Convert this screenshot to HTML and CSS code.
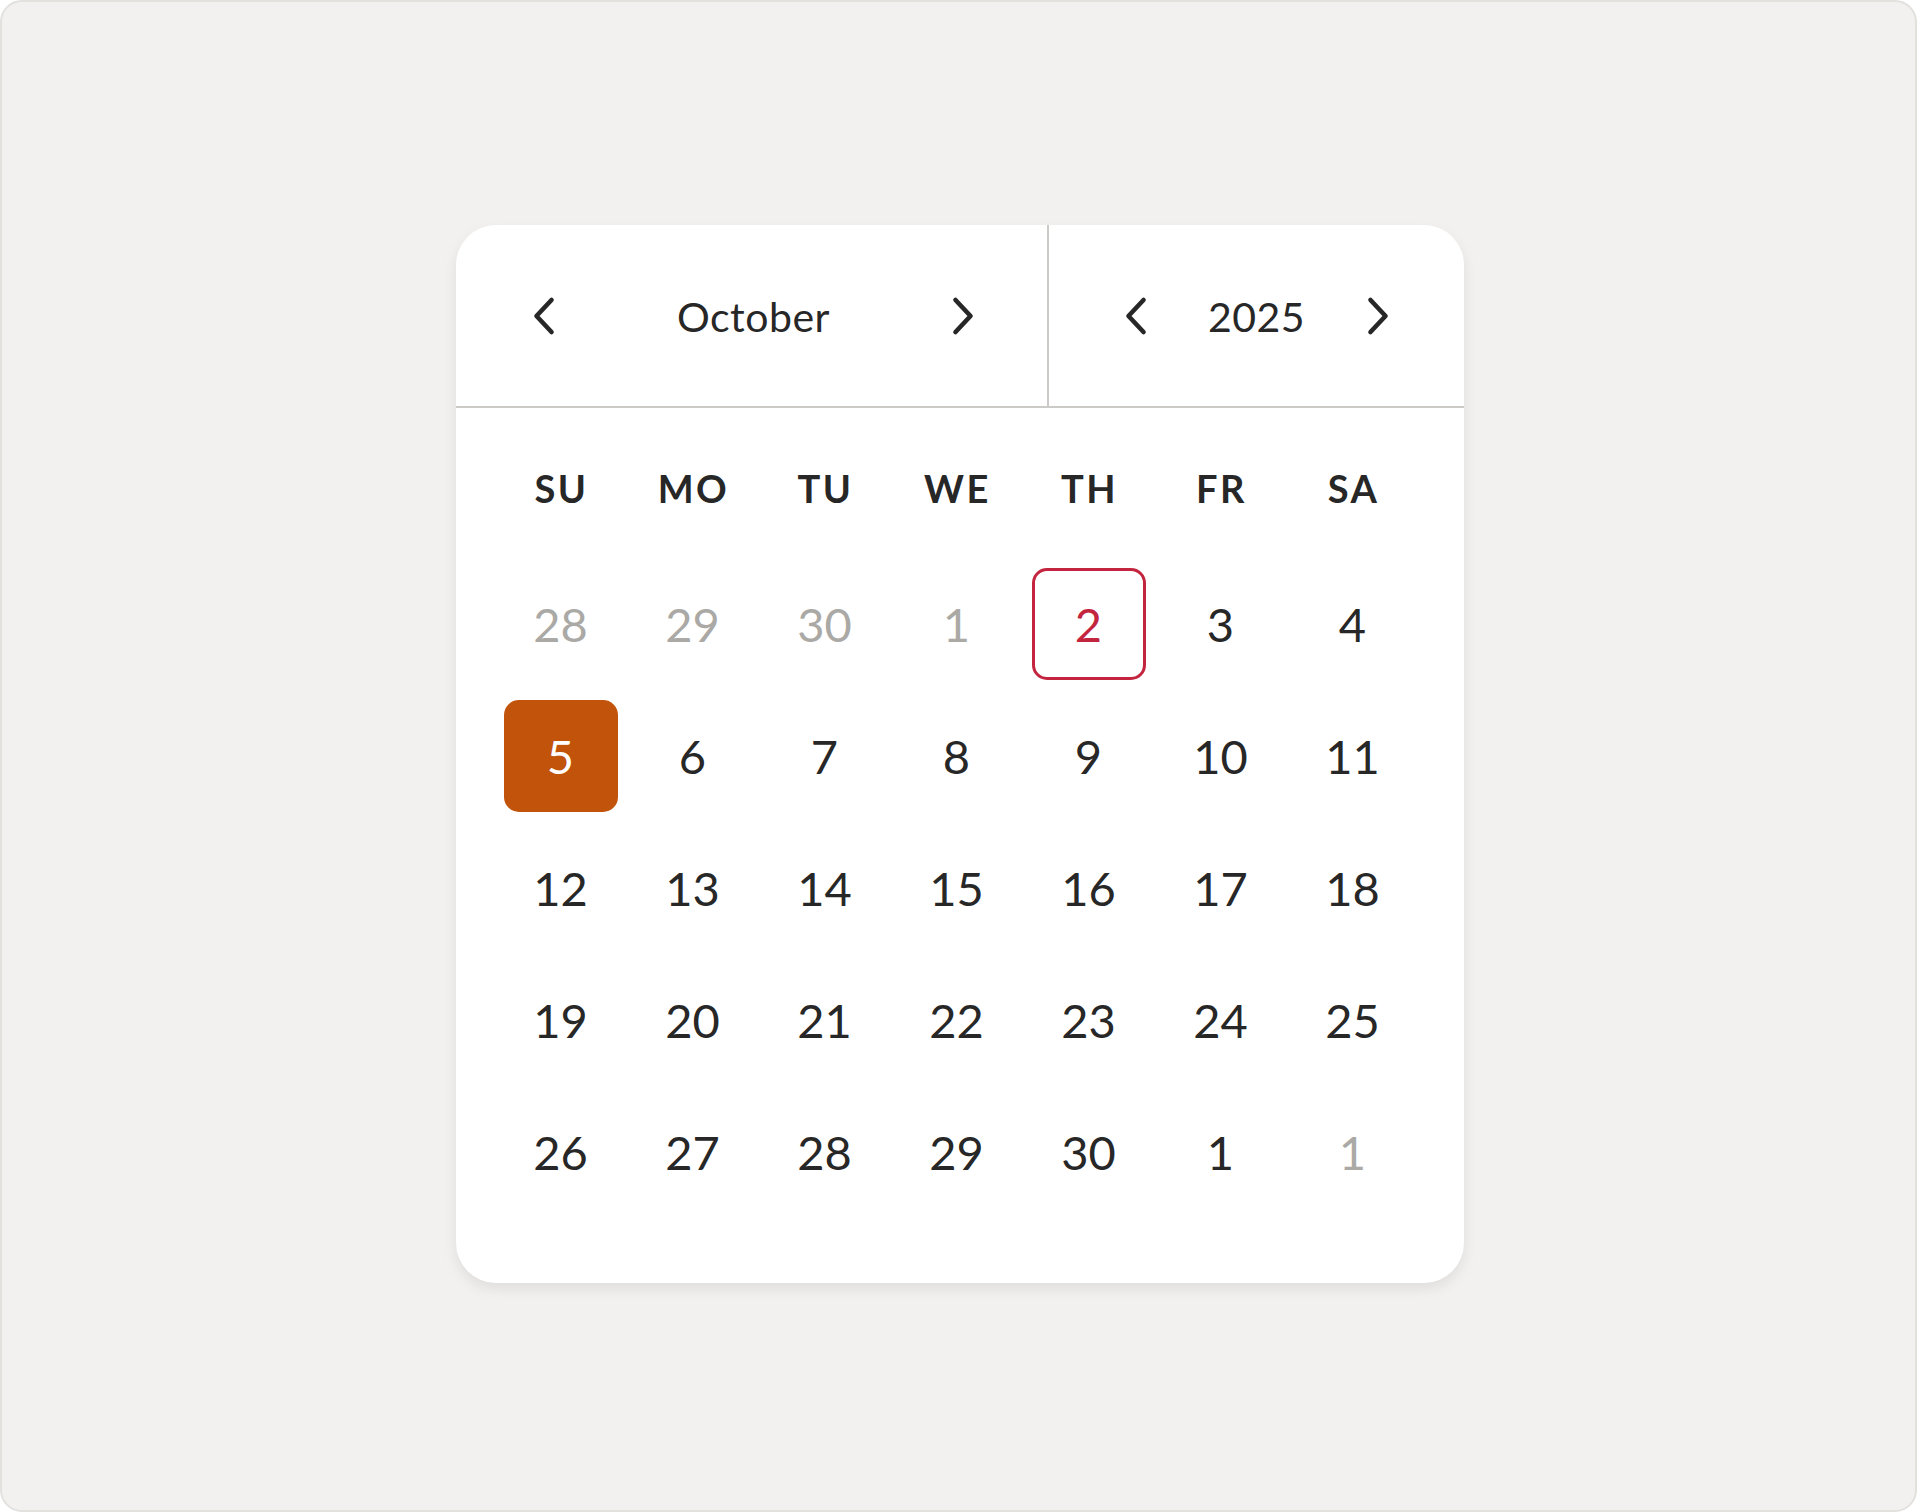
FILE: index.html
```html
<!DOCTYPE html>
<html lang="en">

<head>
    <meta charset="UTF-8">
    <meta name="viewport" content="width=device-width, initial-scale=1.0">
    <title>Calendar</title>
    <link rel="stylesheet" href="styles.css">
</head>

<body>

    <div class="frame">
        <div class="calendar">

            <!-- month and year pickers -->
            <div class="cal-head">
                <div class="picker picker-month">
                    <button class="arrow" aria-label="Previous month">
                        <svg width="24" height="40" viewBox="0 0 24 40"><path d="M19.5 4 L4.5 20 L19.5 36" /></svg>
                    </button>
                    <span class="picker-label">October</span>
                    <button class="arrow" aria-label="Next month">
                        <svg width="24" height="40" viewBox="0 0 24 40"><path d="M4.5 4 L19.5 20 L4.5 36" /></svg>
                    </button>
                </div>
                <div class="picker picker-year">
                    <button class="arrow" aria-label="Previous year">
                        <svg width="24" height="40" viewBox="0 0 24 40"><path d="M19.5 4 L4.5 20 L19.5 36" /></svg>
                    </button>
                    <span class="picker-label">2025</span>
                    <button class="arrow" aria-label="Next year">
                        <svg width="24" height="40" viewBox="0 0 24 40"><path d="M4.5 4 L19.5 20 L4.5 36" /></svg>
                    </button>
                </div>
            </div>

            <!-- day grid -->
            <div class="days">
                <div class="weekday">SU</div>
                <div class="weekday">MO</div>
                <div class="weekday">TU</div>
                <div class="weekday">WE</div>
                <div class="weekday">TH</div>
                <div class="weekday">FR</div>
                <div class="weekday">SA</div>

                <div class="day muted">28</div>
                <div class="day muted">29</div>
                <div class="day muted">30</div>
                <div class="day muted">1</div>
                <div class="day today">2</div>
                <div class="day">3</div>
                <div class="day">4</div>

                <div class="day selected">5</div>
                <div class="day">6</div>
                <div class="day">7</div>
                <div class="day">8</div>
                <div class="day">9</div>
                <div class="day">10</div>
                <div class="day">11</div>

                <div class="day">12</div>
                <div class="day">13</div>
                <div class="day">14</div>
                <div class="day">15</div>
                <div class="day">16</div>
                <div class="day">17</div>
                <div class="day">18</div>

                <div class="day">19</div>
                <div class="day">20</div>
                <div class="day">21</div>
                <div class="day">22</div>
                <div class="day">23</div>
                <div class="day">24</div>
                <div class="day">25</div>

                <div class="day">26</div>
                <div class="day">27</div>
                <div class="day">28</div>
                <div class="day">29</div>
                <div class="day">30</div>
                <div class="day">1</div>
                <div class="day muted">1</div>
            </div>

        </div>
    </div>

</body>

</html>
```

FILE: styles.css
```css
html,
body {
    margin: 0;
    height: 100%;
}

body {
    background-color: #ffffff;
    font-family: 'Lato', 'Noto Sans', sans-serif;
    color: #272727;
}

.frame {
    box-sizing: border-box;
    height: 100%;
    border: 2px solid #e2e1de;
    border-radius: 22px;
    background-color: #f2f1ef;
    display: flex;
    justify-content: center;
    align-items: flex-start;
    padding: 223px 0 0 2px;
}

.calendar {
    width: 1008px;
    background-color: #ffffff;
    border-radius: 40px;
    box-shadow: 0 6px 14px rgba(0, 0, 0, 0.08);
    overflow: hidden;
}

/* header with the two pickers */
.cal-head {
    display: grid;
    grid-template-columns: 593px 1fr;
    height: 181px;
    border-bottom: 2px solid #cbcac6;
}

.picker {
    display: flex;
    align-items: center;
    justify-content: space-between;
}

.picker-month {
    border-right: 2px solid #cbcac6;
    padding: 0 61px 0 66px;
}

.picker-year {
    padding: 0 64px 0 65px;
}

.picker-label {
    font-size: 41px;
    letter-spacing: 0.5px;
    padding-top: 2px;
}

.arrow {
    width: 44px;
    height: 44px;
    padding: 0;
    border: none;
    background: none;
    display: flex;
    align-items: center;
    justify-content: center;
}

.arrow path {
    fill: none;
    stroke: #272727;
    stroke-width: 4.6;
    stroke-linecap: round;
    stroke-linejoin: round;
}

/* weekday names and dates */
.days {
    display: grid;
    grid-template-columns: repeat(7, 1fr);
    grid-auto-rows: 112px;
    gap: 20px 18px;
    padding: 28px 54px 75px 48px;
}

.weekday,
.day {
    display: flex;
    align-items: center;
    justify-content: center;
    box-sizing: border-box;
}

.weekday {
    font-size: 38px;
    font-weight: 700;
    letter-spacing: 2.5px;
    padding: 0 0 8px 2px;
}

.day {
    font-size: 47px;
    border-radius: 15px;
}

.muted {
    color: #aaa9a5;
}

.today {
    color: #c3253f;
    border: 3px solid #c3253f;
}

.selected {
    background-color: #c2530b;
    color: #ffffff;
}
```
